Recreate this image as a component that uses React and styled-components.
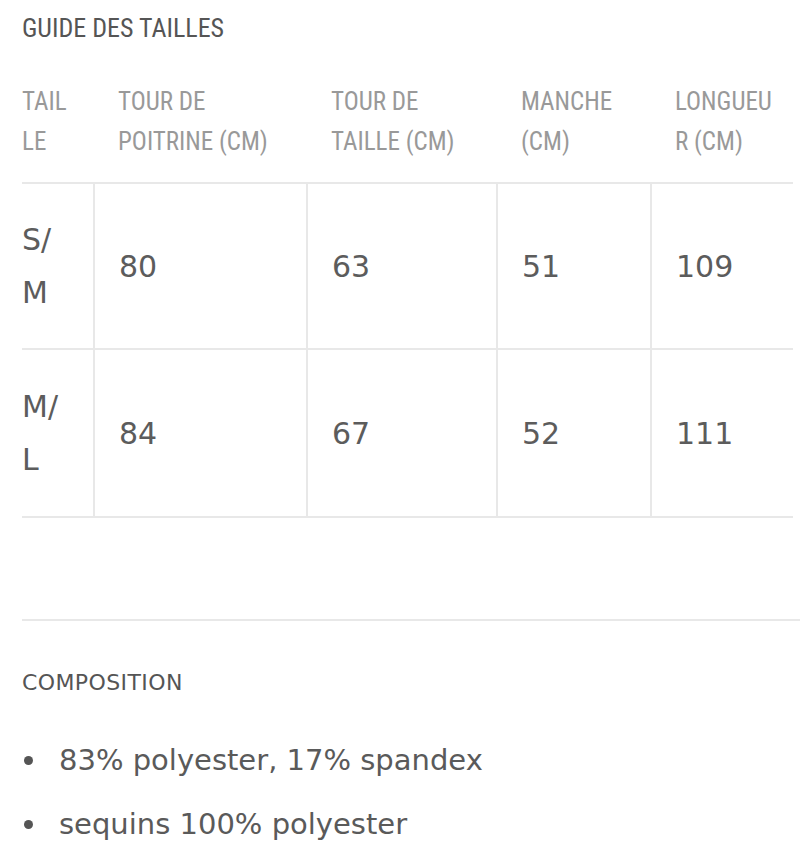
import React from 'react';
import styled, { createGlobalStyle } from 'styled-components';

const GlobalStyle = createGlobalStyle`
  body {
    margin: 0;
    background: #fff;
  }
`;

const HEAD_FONT = `"Liberation Sans Narrow", "Roboto Condensed", "DejaVu Sans Condensed", Lato, sans-serif`;
const BODY_FONT = `"DejaVu Sans", "Noto Sans", sans-serif`;

const Page = styled.div`
  padding: 8px 0 0 22px;
  color: #555;
`;

const Title = styled.h2`
  margin: 0;
  font-family: ${HEAD_FONT};
  font-weight: 400;
  font-size: 26px;
  line-height: 40px;
  color: #555;
`;

const SizeTable = styled.table`
  margin-top: 32px;
  width: 771px;
  border-collapse: collapse;
  table-layout: fixed;
`;

const HeadCell = styled.th`
  box-sizing: border-box;
  width: ${(p) => p.$w}px;
  padding: 2px 0 20px ${(p) => (p.$first ? 0 : 24)}px;
  text-align: left;
  vertical-align: top;
  font-family: ${HEAD_FONT};
  font-weight: 400;
  font-size: 25px;
  line-height: 40px;
  color: #999;
  white-space: nowrap;
  border-bottom: 2px solid #e8e8e8;
`;

const BodyRow = styled.tr`
  border-bottom: 2px solid #e8e8e8;
`;

const Cell = styled.td`
  box-sizing: border-box;
  height: ${(p) => p.$h}px;
  padding: 0 0 0 ${(p) => (p.$first ? 0 : 24)}px;
  vertical-align: middle;
  font-family: ${BODY_FONT};
  font-size: 30px;
  line-height: 53px;
  color: #5c5c5c;
  border-left: ${(p) => (p.$first ? 'none' : '2px solid #e8e8e8')};
`;

const Divider = styled.hr`
  margin: 101px 0 0;
  border: none;
  border-top: 2px solid #e8e8e8;
`;

const SubTitle = styled.h3`
  margin: 44px 0 0;
  font-family: ${BODY_FONT};
  font-weight: 400;
  font-size: 22px;
  line-height: 36px;
  letter-spacing: 0.4px;
  color: #555;
`;

const List = styled.ul`
  list-style: none;
  margin: 27px 0 0;
  padding: 0;
`;

const Item = styled.li`
  display: flex;
  align-items: center;
  gap: 26px;
  height: 64px;
  font-family: ${BODY_FONT};
  font-size: 29px;
  color: #5a5a5a;

  &::before {
    content: '';
    width: 9px;
    height: 9px;
    margin-left: 2px;
    border-radius: 50%;
    background: #555;
  }
`;

const columns = [
  { w: 72, label: ['TAIL', 'LE'] },
  { w: 213, label: ['TOUR DE', 'POITRINE (CM)'] },
  { w: 190, label: ['TOUR DE', 'TAILLE (CM)'] },
  { w: 154, label: ['MANCHE', '(CM)'] },
  { w: 142, label: ['LONGUEU', 'R (CM)'] },
];

const rows = [
  { h: 166, cells: [['S/', 'M'], '80', '63', '51', '109'] },
  { h: 168, cells: [['M/', 'L'], '84', '67', '52', '111'] },
];

const Lines = ({ parts }) =>
  parts.map((t, i) => (
    <React.Fragment key={i}>
      {i > 0 && <br />}
      {t}
    </React.Fragment>
  ));

export default function App() {
  return (
    <Page>
      <GlobalStyle />
      <Title>GUIDE DES TAILLES</Title>
      <SizeTable>
        <thead>
          <tr>
            {columns.map((c, i) => (
              <HeadCell key={i} $w={c.w} $first={i === 0}>
                <Lines parts={c.label} />
              </HeadCell>
            ))}
          </tr>
        </thead>
        <tbody>
          {rows.map((r, ri) => (
            <BodyRow key={ri}>
              {r.cells.map((v, i) => (
                <Cell key={i} $h={r.h} $first={i === 0}>
                  {Array.isArray(v) ? <Lines parts={v} /> : v}
                </Cell>
              ))}
            </BodyRow>
          ))}
        </tbody>
      </SizeTable>
      <Divider />
      <SubTitle>COMPOSITION</SubTitle>
      <List>
        <Item>83% polyester, 17% spandex</Item>
        <Item>sequins 100% polyester</Item>
      </List>
    </Page>
  );
}
